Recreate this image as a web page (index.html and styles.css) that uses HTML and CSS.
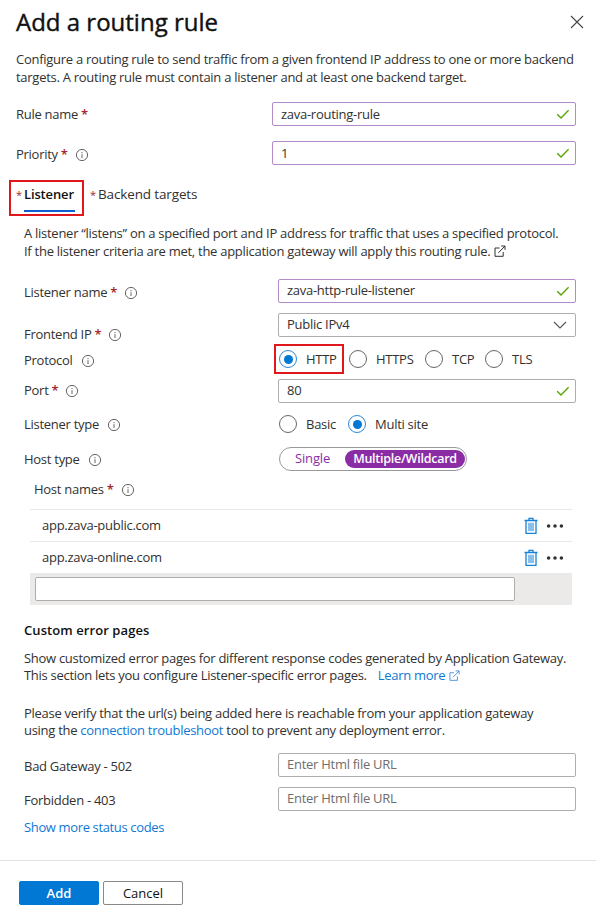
FILE: index.html
```html
<!DOCTYPE html>
<html lang="en">

<head>
    <meta charset="UTF-8" />
    <meta name="viewport" content="width=device-width, initial-scale=1.0" />
    <title>Add a routing rule</title>
    <link rel="stylesheet" href="styles.css">
</head>

<body>
    <!-- shared icons -->
    <svg class="sprite" width="0" height="0">
        <symbol id="info" viewBox="0 0 14 14">
            <circle cx="7" cy="7" r="5.6" fill="none" stroke="currentColor" />
            <path d="M7 6.2v3.8M7 4v1.2" fill="none" stroke="currentColor" />
        </symbol>
        <symbol id="check" viewBox="0 0 14 12">
            <path d="M1.2 6.2l3.8 3.8L12.6 2.2" fill="none" stroke="currentColor" stroke-width="1.3" />
        </symbol>
        <symbol id="external" viewBox="0 0 12 12">
            <path d="M5.5 3H1v8.3h8.2V7M4.4 7.8L11 1M7.2 1H11v3.8" fill="none" stroke="currentColor" />
        </symbol>
        <symbol id="trash" viewBox="0 0 14 18">
            <path d="M0.5 3.5h13M5 3V1.4h4V3M2 4v12.3h10V4" fill="none" stroke="currentColor" stroke-width="1.3" />
            <path d="M4 5.5h6v8.7H4z" fill="currentColor" opacity="0.3" />
            <path d="M5 6v8M7 6v8M9 6v8" stroke="currentColor" stroke-width="0.6" />
        </symbol>
        <symbol id="dots" viewBox="0 0 18 6">
            <circle cx="2.6" cy="3" r="1.8" fill="currentColor" />
            <circle cx="9" cy="3" r="1.8" fill="currentColor" />
            <circle cx="15.4" cy="3" r="1.8" fill="currentColor" />
        </symbol>
    </svg>

    <header class="header">
        <h1>Add a routing rule</h1>
        <svg class="close" viewBox="0 0 14 14">
            <path d="M1 1l12 12M13 1L1 13" fill="none" stroke="currentColor" stroke-width="1.1" />
        </svg>
    </header>

    <p class="intro">Configure a routing rule to send traffic from a given frontend IP address to one or more backend<br>targets. A routing rule must contain a listener and at least one backend target.</p>

    <div class="form top-form">
        <div class="row">
            <label for="ruleName">Rule name <b class="req">*</b></label>
            <div class="field edited">
                <input type="text" id="ruleName" value="zava-routing-rule" />
                <svg class="check"><use href="#check" /></svg>
            </div>
        </div>
        <div class="row row-priority">
            <label for="priority">Priority <b class="req">*</b><svg class="info"><use href="#info" /></svg></label>
            <div class="field edited">
                <input type="text" id="priority" value="1" />
                <svg class="check"><use href="#check" /></svg>
            </div>
        </div>
    </div>

    <nav class="tabs">
        <div class="tab active"><span class="star">*</span><span class="tab-text">Listener</span></div>
        <div class="tab"><span class="star">*</span><span class="tab-text">Backend targets</span></div>
    </nav>

    <main class="listener">
        <p class="about">A listener “listens” on a specified port and IP address for traffic that uses a specified protocol.<br>If the listener criteria are met, the application gateway will apply this routing rule.<svg class="external"><use href="#external" /></svg></p>

        <div class="form">
            <div class="row row-name">
                <label for="listenerName">Listener name <b class="req">*</b><svg class="info"><use href="#info" /></svg></label>
                <div class="field edited">
                    <input type="text" id="listenerName" value="zava-http-rule-listener" />
                    <svg class="check"><use href="#check" /></svg>
                </div>
            </div>
            <div class="row row-ip">
                <label>Frontend IP <b class="req">*</b><svg class="info"><use href="#info" /></svg></label>
                <div class="field">
                    <span class="value">Public IPv4</span>
                    <svg class="chevron" viewBox="0 0 14 8">
                        <path d="M1 1l6 6 6-6" fill="none" stroke="currentColor" stroke-width="1.1" />
                    </svg>
                </div>
            </div>
            <div class="row row-protocol">
                <label>Protocol<svg class="info"><use href="#info" /></svg></label>
                <div class="protocols">
                    <div class="radio checked marked"><i></i><span>HTTP</span></div>
                    <div class="radio https"><i></i><span>HTTPS</span></div>
                    <div class="radio tcp"><i></i><span>TCP</span></div>
                    <div class="radio tls"><i></i><span>TLS</span></div>
                </div>
            </div>
            <div class="row row-port">
                <label for="port">Port <b class="req">*</b><svg class="info"><use href="#info" /></svg></label>
                <div class="field">
                    <input type="text" id="port" value="80" />
                    <svg class="check"><use href="#check" /></svg>
                </div>
            </div>
            <div class="row row-type">
                <label>Listener type<svg class="info"><use href="#info" /></svg></label>
                <div class="types">
                    <div class="radio basic"><i></i><span>Basic</span></div>
                    <div class="radio checked"><i></i><span>Multi site</span></div>
                </div>
            </div>
            <div class="row row-host">
                <label>Host type<svg class="info"><use href="#info" /></svg></label>
                <div class="switch">
                    <span class="option">Single</span>
                    <span class="option selected">Multiple/Wildcard</span>
                </div>
            </div>
        </div>

        <div class="hosts">
            <label>Host names <b class="req">*</b><svg class="info"><use href="#info" /></svg></label>
            <div class="host"><span>app.zava-public.com</span><svg class="trash"><use href="#trash" /></svg><svg class="dots"><use href="#dots" /></svg></div>
            <div class="host"><span>app.zava-online.com</span><svg class="trash"><use href="#trash" /></svg><svg class="dots"><use href="#dots" /></svg></div>
            <div class="new-host"><input type="text" /></div>
        </div>

        <h2>Custom error pages</h2>
        <p class="errors">Show customized error pages for different response codes generated by Application Gateway.<br>This section lets you configure Listener-specific error pages.<a class="more">Learn more<svg class="external"><use href="#external" /></svg></a></p>
        <p class="verify">Please verify that the url(s) being added here is reachable from your application gateway<br>using the <a>connection troubleshoot</a> tool to prevent any deployment error.</p>

        <div class="form">
            <div class="row row-502">
                <label for="bad">Bad Gateway - 502</label>
                <div class="field">
                    <input type="text" id="bad" placeholder="Enter Html file URL" />
                </div>
            </div>
            <div class="row row-403">
                <label for="forbidden">Forbidden - 403</label>
                <div class="field">
                    <input type="text" id="forbidden" placeholder="Enter Html file URL" />
                </div>
            </div>
        </div>
        <a class="show-more">Show more status codes</a>
    </main>

    <footer class="footer">
        <button class="btn primary">Add</button>
        <button class="btn">Cancel</button>
    </footer>
</body>

</html>
```

FILE: styles.css
```css
* {
    box-sizing: border-box;
}

body {
    margin: 0;
    height: 916px;
    overflow: hidden;
    background: #fff;
    color: #323130;
    font-family: 'Open Sans', 'Noto Sans', sans-serif;
    font-size: 13px;
    line-height: 17.5px;
    letter-spacing: -0.27px;
    white-space: nowrap;
}

h1, h2, p {
    margin: 0;
}

a {
    color: #0f78d4;
}

.sprite {
    display: block;
}

.header {
    display: flex;
    justify-content: space-between;
    align-items: center;
    height: 44px;
    padding: 0 12px 0 16px;
}

h1 {
    color: #111;
    font-size: 24px;
    font-weight: 500;
    letter-spacing: 0;
    -webkit-text-stroke: 0.4px #111;
}

.close {
    width: 14px;
    height: 14px;
    color: #444;
}

.intro {
    margin: 7px 0 0 16px;
}

.top-form {
    margin: 16px 20px 0 16px;
}

.row {
    display: flex;
    justify-content: space-between;
    align-items: flex-start;
    height: 24px;
}

label {
    display: flex;
    align-items: center;
    height: 24px;
}

.req {
    margin-left: 3px;
    color: #a4262c;
    font-weight: 600;
}

.info {
    width: 14px;
    height: 14px;
    margin-left: 8px;
    color: #666;
}

.req + .info {
    margin-left: 7px;
}

.field {
    display: flex;
    align-items: center;
    width: 298px;
    height: 24px;
    padding: 0 5px 0 8px;
    border: 1px solid #b0aeac;
    border-radius: 2px;
}

.top-form .field {
    width: 304px;
}

.top-form label, .top-form input {
    padding-top: 2px;
}

.field.edited {
    border-color: #b48ac9;
}

.field input {
    flex: 1;
    min-width: 0;
    padding: 0;
    border: none;
    outline: none;
    background: none;
    color: inherit;
    font: inherit;
    letter-spacing: inherit;
}

.top-form .field input {
    padding-top: 2px;
}

.field input::placeholder {
    color: #706e6c;
}

.check {
    width: 14px;
    height: 12px;
    color: #57a300;
}

.chevron {
    width: 14px;
    height: 8px;
    margin: 0 3px 0 auto;
    color: #555;
}

.row-priority {
    margin-top: 15px;
}

.top-form .row-priority label {
    padding-top: 4px;
}

.tabs {
    display: flex;
    gap: 6px;
    margin: 15px 0 0 9px;
    font-size: 13.5px;
    letter-spacing: -0.14px;
}

.tab {
    display: flex;
    height: 36px;
    padding-top: 6px;
}

.tab.active {
    width: 75px;
    padding: 4px 0 0 5px;
    border: 2px solid #e0181e;
}

.tab.active .tab-text {
    width: 51px;
    height: 26px;
    border-bottom: 2px solid #0f5fd0;
    color: #111;
    font-size: 13px;
    font-weight: 600;
}

.star {
    width: 8px;
    color: #a4262c;
    font-size: 11px;
}

.listener {
    padding: 0 20px 0 24px;
}

.about {
    margin-top: 9px;
    letter-spacing: -0.27px;
}

.external {
    width: 12px;
    height: 12px;
    margin-left: 4px;
    vertical-align: -1px;
}

.row-name {
    margin-top: 19px;
}

.row-name label {
    padding-top: 4px;
}

.row-ip {
    margin-top: 10px;
}

.row-ip label {
    padding-top: 19px;
}

.row-protocol {
    height: 30px;
    margin-top: 7px;
    align-items: center;
}

.row-protocol label {
    padding-top: 4px;
}

.protocols, .types {
    display: flex;
    align-items: center;
    width: 302px;
}

.radio {
    display: flex;
    align-items: center;
}

.radio i {
    display: flex;
    flex: none;
    align-items: center;
    justify-content: center;
    width: 18px;
    height: 18px;
    margin-right: 9px;
    border: 1px solid #666;
    border-radius: 50%;
}

.protocols span {
    padding-top: 2px;
}

.radio.checked i {
    border-color: #2b88d8;
}

.radio.checked i::after {
    content: '';
    width: 9px;
    height: 9px;
    border-radius: 50%;
    background: #0078d4;
}

.radio.marked {
    width: 70px;
    height: 30px;
    padding-left: 3px;
    border: 2px solid #e0181e;
}

.https {
    width: 76px;
    margin-left: 5px;
}

.tcp {
    width: 60px;
}

.row-port {
    margin-top: 5px;
}

.row-type {
    margin-top: 9px;
}

.row-type label, .row-host label, .types span {
    padding-top: 2px;
}

.types {
    width: 297px;
    height: 24px;
}

.basic {
    width: 69px;
}

.row-host {
    margin-top: 11px;
}

.switch {
    display: flex;
    align-items: center;
    width: 188px;
    height: 24px;
    margin-right: 109px;
    padding: 0 1px 0 15px;
    border: 1px solid #999;
    border-radius: 12px;
    color: #8a2da5;
    letter-spacing: -0.15px;
}

.option.selected {
    width: 120px;
    height: 18px;
    margin-left: auto;
    border-radius: 9px;
    background: #8a2da5;
    color: #fff;
    font-size: 12.5px;
    font-weight: 600;
    letter-spacing: -0.25px;
    line-height: 17px;
    text-align: center;
}

.hosts {
    margin: 7px 4px 0 6px;
}

.hosts label {
    padding-left: 4px;
}

.host {
    display: flex;
    align-items: center;
    height: 32px;
    padding: 0 8px 0 12px;
    border-top: 1px solid #e8e8e8;
}

.hosts label + .host {
    margin-top: 7px;
}

.host span {
    flex: 1;
}

.trash {
    width: 14px;
    height: 18px;
    color: #1683d8;
}

.dots {
    width: 18px;
    height: 6px;
    margin-left: 8px;
    color: #333;
}

.new-host {
    height: 32px;
    padding: 4px 5px;
    background: #ebeae9;
}

.new-host input {
    display: block;
    width: 480px;
    height: 24px;
    border: 1px solid #b0aeac;
    border-radius: 2px;
    outline: none;
}

h2 {
    margin-top: 17px;
    color: #111;
    font-size: 13px;
    font-weight: 600;
    letter-spacing: 0.08px;
}

.errors {
    margin-top: 10px;
    letter-spacing: -0.29px;
}

.more {
    margin-left: 11px;
}

.more .external {
    width: 11px;
    height: 11px;
    color: #4a8fe0;
}

.verify {
    margin-top: 20px;
    letter-spacing: -0.28px;
}

.row-502 {
    margin-top: 13px;
}

.row-502 label, .row-403 label {
    padding-top: 5px;
}

.row-403 {
    margin-top: 10px;
}

.show-more {
    display: block;
    margin-top: 8px;
    letter-spacing: -0.36px;
}

.footer {
    display: flex;
    gap: 4px;
    margin-top: 24px;
    padding: 20px 0 0 19px;
    border-top: 1px solid #e3e3e3;
}

.btn {
    width: 80px;
    height: 24px;
    padding: 0;
    border: 1px solid #8a8886;
    border-radius: 2px;
    background: #fff;
    color: #111;
    font: 500 13px 'Open Sans', sans-serif;
}

.btn.primary {
    border-color: #0078d4;
    background: #0078d4;
    color: #fff;
    font-weight: 600;
}
```
